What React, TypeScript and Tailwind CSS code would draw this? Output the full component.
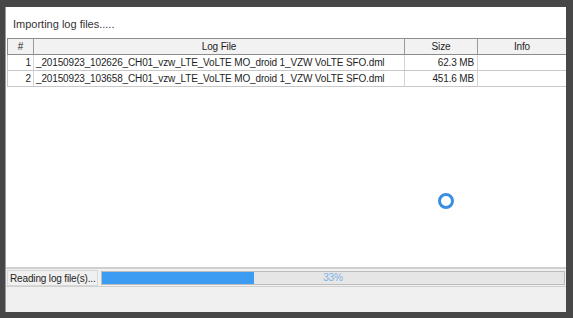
const rows = [
  { n: 1, file: "_20150923_102626_CH01_vzw_LTE_VoLTE MO_droid 1_VZW VoLTE SFO.dml", size: "62.3 MB" },
  { n: 2, file: "_20150923_103658_CH01_vzw_LTE_VoLTE MO_droid 1_VZW VoLTE SFO.dml", size: "451.6 MB" },
];

export default function App() {
  return (
    <div
      className="w-[573px] h-[318px] bg-[#474747] pt-[7px] pl-[5px] pr-[7px] pb-[6px] text-[#1e1e1e]"
      style={{ fontFamily: '"Liberation Sans", Arial, sans-serif' }}
    >
      <div className="h-full flex flex-col bg-[#f0f0f0] border-l border-[#9a9a9a]">
        {/* main area */}
        <div className="relative flex-1 bg-white">
          <div className="h-[31px] pl-[7px] pt-[11px] text-[11px] leading-[13px] text-[#333]">
            Importing log files.....
          </div>

          {/* table */}
          <div className="ml-px text-[10px] leading-[15px] tracking-[-0.15px]">
            <div className="grid grid-cols-[26px_371px_73px_1fr] h-[17px] bg-[#f2f2f2] border-y border-l border-[#8c8c8c]">
              <div className="text-center border-r border-[#9a9a9a]">#</div>
              <div className="text-center border-r border-[#9a9a9a]">Log File</div>
              <div className="text-center border-r border-[#9a9a9a]">Size</div>
              <div className="text-center">Info</div>
            </div>
            {rows.map((r) => (
              <div
                key={r.n}
                className="grid grid-cols-[26px_371px_73px_1fr] h-[16px] border-b border-l border-[#c8c8c8]"
              >
                <div className="text-right pr-[2px] border-r border-[#d4d4d4]">{r.n}</div>
                <div className="pl-[2px] whitespace-nowrap overflow-hidden border-r border-[#d4d4d4]">
                  {r.file}
                </div>
                <div className="text-right pr-[3px] border-r border-[#d4d4d4]">{r.size}</div>
                <div></div>
              </div>
            ))}
          </div>

          {/* busy indicator */}
          <div className="absolute left-[432px] top-[186px] w-[16px] h-[16px] rounded-full border-[3.5px] border-[#3a8fe3]"></div>
        </div>

        {/* status bar */}
        <div className="h-[19px] flex items-center gap-[3px] pl-px pr-px border-t-2 border-[#cfcfcf] bg-[#f0f0f0] text-[10px] tracking-[-0.15px]">
          <div className="w-[91px] h-[16px] leading-[15px] pl-[2px] border border-[#d8d8d8] whitespace-nowrap overflow-hidden">
            Reading log file(s)...
          </div>
          <div className="relative flex-1 h-[14px] bg-[#e6e6e6] border border-[#bcbcbc]">
            <div className="h-full w-[33%] bg-[#3c9cf2]"></div>
            <div className="absolute inset-0 flex items-center justify-center text-[10px] text-[#7fb2e6]">
              33%
            </div>
          </div>
        </div>
        <div className="h-[26px] border-t border-[#d0d0d0]"></div>
      </div>
    </div>
  );
}
